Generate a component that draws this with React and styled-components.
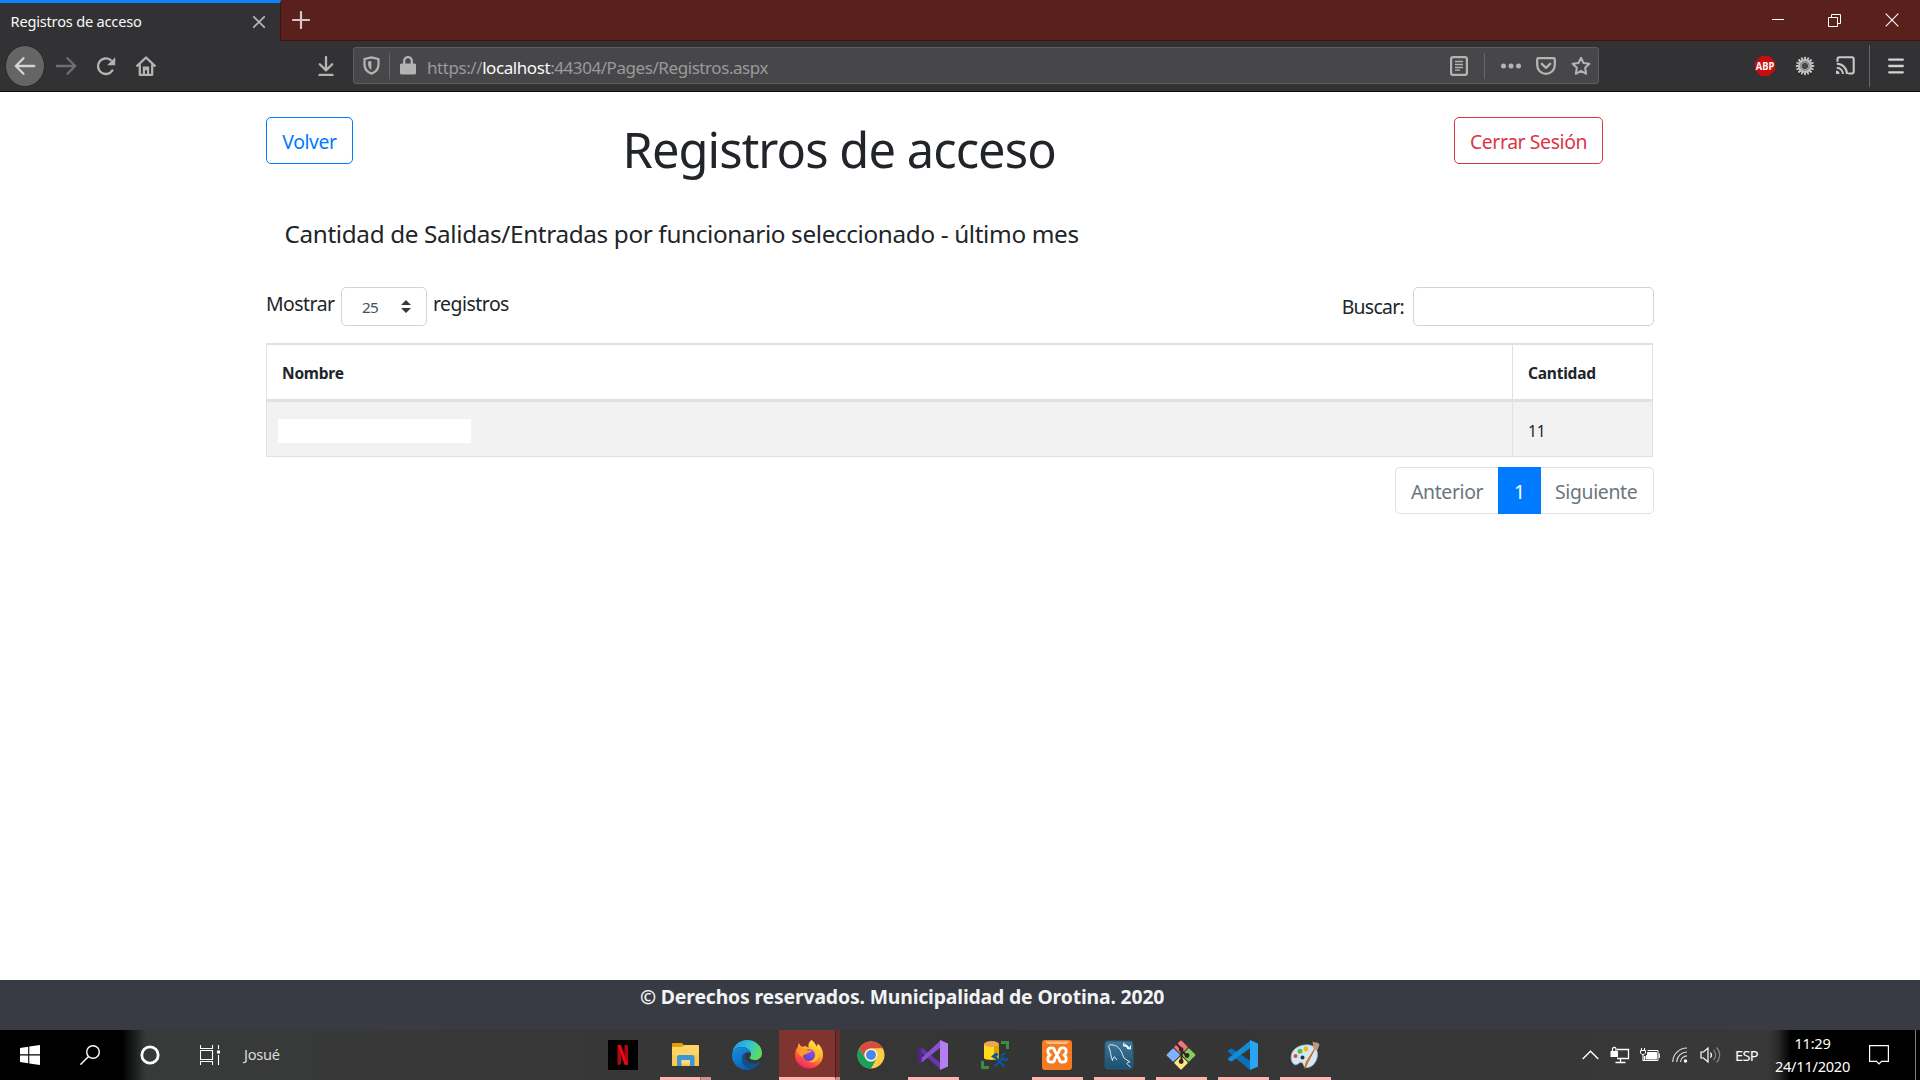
import React from "react";
import styled, { createGlobalStyle, css } from "styled-components";

const GlobalStyle = createGlobalStyle`
  *, *::before, *::after { box-sizing: border-box; }
  html, body { margin: 0; padding: 0; overflow: hidden; background: #fff; }
  body { font-family: "Segoe UI", "Noto Sans", "Open Sans", sans-serif; color: #212529; }
  svg { display: block; flex: none; }
`;

const type = (size, spacing = 0) => css`
  font-size: ${size}px;
  letter-spacing: ${spacing}px;
  white-space: pre;
`;

const Screen = styled.div`
  width: 1920px;
  height: 1080px;
  display: flex;
  flex-direction: column;
  overflow: hidden;
`;

/* ---------- Browser chrome ---------- */
const TitleBar = styled.header`
  display: flex;
  height: 41px;
  background: #5a201c;
  border-bottom: 1px solid #3b1512;
`;
const Tab = styled.div`
  display: flex;
  align-items: center;
  width: 281px;
  height: 41px;
  padding: 0 14px 0 10.5px;
  background: #323234;
  border-top: 3px solid #0a84ff;
  border-right: 1px solid #3b1512;
`;
const TabTitle = styled.span`
  ${type(14.6, -0.2)}
  line-height: 20px;
  flex: 1;
  padding-bottom: 2px;
  color: #f9f9fa;
`;
const NewTab = styled.div`
  display: flex;
  align-items: center;
  justify-content: center;
  width: 40px;
  height: 40px;
`;
const WindowControls = styled.div`
  display: flex;
  margin-left: auto;
`;
const WindowButton = styled.div`
  display: flex;
  align-items: center;
  justify-content: center;
  width: 57px;
  height: 40px;
`;
const NavBar = styled.nav`
  display: flex;
  align-items: center;
  height: 51px;
  padding: 0 4px 1px 5px;
  background: #323234;
  border-bottom: 1px solid #0c0c0d;
`;
const BackButton = styled.div`
  display: flex;
  align-items: center;
  justify-content: center;
  width: 40px;
  height: 42px;
  margin-right: 1px;
  background: #656566;
  border: 1px solid #29292b;
  border-radius: 50%;
`;
const Slot = styled.div`
  display: flex;
  align-items: center;
  justify-content: center;
  width: ${(p) => p.$w || 40}px;
  height: 36px;
  margin-left: ${(p) => p.$ml || 0}px;
`;
const AddressBar = styled.div`
  display: flex;
  align-items: center;
  width: 1246px;
  height: 37px;
  margin-left: 7px;
  background: #474749;
  border: 1px solid #5d5d5f;
  border-radius: 3px;
`;
const Divider = styled.div`
  width: 1px;
  height: ${(p) => p.$h || 26}px;
  margin: 0 ${(p) => p.$mr || 0}px 0 ${(p) => p.$ml || 0}px;
  background: #66676c;
`;
const Url = styled.span`
  ${type(17, -0.43)}
  flex: 1;
  padding: 3px 0 0 1px;
  color: #9a9a9c;
`;
const Host = styled.span`
  color: #f9f9fa;
`;
const Extensions = styled.div`
  display: flex;
  align-items: center;
  margin-left: auto;
`;

/* ---------- Page ---------- */
const Page = styled.main`
  flex: 1;
  padding: 25px 266px 0;
  background: #fff;
`;
const PageHeader = styled.div`
  display: flex;
  align-items: flex-start;
  width: 1337px;
  height: 102px;
`;
const OutlineButton = styled.button`
  ${type(19.4, -0.4)}
  width: ${(p) => p.$w}px;
  height: 47px;
  padding: 3px 0 0;
  font-family: inherit;
  line-height: 40px;
  color: ${(p) => p.$color};
  background: transparent;
  border: 1px solid ${(p) => p.$color};
  border-radius: 5px;
`;
const Title = styled.h1`
  ${type(48.8, -0.94)}
  flex: 1;
  margin: 2px 0 0 269.5px;
  font-weight: 400;
  line-height: 60px;
`;
const Subtitle = styled.h5`
  ${type(24.3, -0.355)}
  height: 68px;
  margin: 0;
  padding-left: 18.5px;
  font-weight: 400;
  line-height: 30px;
`;
const Controls = styled.div`
  display: flex;
  justify-content: space-between;
  height: 56px;
`;
const LengthLabel = styled.label`
  ${type(19.4, -0.5)}
  display: flex;
  height: 39px;
  line-height: 34px;
`;
const Select = styled.span`
  ${type(15.2, -0.7)}
  display: flex;
  align-items: center;
  justify-content: space-between;
  width: 86px;
  height: 39px;
  margin: 0 6px 0 auto;
  padding: 0 15px 0 20px;
  line-height: 20px;
  color: #495057;
  border: 1px solid #ced4da;
  border-radius: 5px;
`;
const LengthPrefix = styled.span`
  width: 75px;
`;
const SearchLabel = styled.label`
  ${type(19.4, -0.7)}
  display: flex;
  gap: 9px;
  height: 39px;
  line-height: 40px;
`;
const SearchInput = styled.input`
  width: 241px;
  height: 39px;
  border: 1px solid #ced4da;
  border-radius: 5px;
  outline: none;
`;
const Table = styled.div`
  width: 1387px;
  border: 1px solid #dee2e6;
  border-top-width: 2px;
`;
const Row = styled.div`
  display: grid;
  grid-template-columns: 1245px 1fr;
  height: ${(p) => (p.$head ? 57 : 54)}px;
  background: ${(p) => (p.$head ? "#fff" : "#f2f2f2")};
  border-bottom: ${(p) => (p.$head ? "3px solid #dee2e6" : "none")};
`;
const Cell = styled.div`
  ${type(15.5, -0.22)}
  display: flex;
  align-items: center;
  padding: ${(p) => (p.$head ? 2 : 4)}px 0 0 15px;
  font-weight: ${(p) => (p.$head ? 700 : 400)};
  & + & { border-left: 1px solid #dee2e6; }
`;
const NameMask = styled.div`
  width: 193px;
  height: 24px;
  margin: 0 0 0 -4px;
  background: #fff;
`;
const Pagination = styled.div`
  display: flex;
  width: 259px;
  height: 47px;
  margin: 10px 0 0 1129px;
`;
const PageLink = styled.div`
  ${type(19.4, -0.35)}
  width: ${(p) => p.$w}px;
  padding: 3px 0 0 ${(p) => p.$pl}px;
  line-height: 41px;
  color: ${(p) => (p.$active ? "#fff" : "#6c757d")};
  background: ${(p) => (p.$active ? "#007bff" : "#fff")};
  border: 1px solid ${(p) => (p.$active ? "#007bff" : "#dee2e6")};
  &:first-child { border-radius: 5px 0 0 5px; border-right: 0; }
  &:last-child { border-radius: 0 5px 5px 0; border-left: 0; }
`;
const Footer = styled.footer`
  ${type(19.4, -0.165)}
  height: 50px;
  padding: 2px 0 0 640px;
  font-weight: 700;
  line-height: 30px;
  color: #f3f4f5;
  background: #383b44;
`;

/* ---------- Taskbar ---------- */
const Taskbar = styled.div`
  display: flex;
  height: 50px;
  color: #fff;
  background: linear-gradient(90deg, #000 0, #000 122px, #1b1c1c 134px, #383a3a 146px, #383838 400px, #353535 1100px, #383838 1768px, #2a2a2a 1778px, #000 1791px);
`;
const TaskSlot = styled.div`
  display: flex;
  align-items: center;
  justify-content: center;
  width: 60px;
`;
const UserName = styled.span`
  ${type(14.6, -0.25)}
  width: 352px;
  padding-left: 4px;
  line-height: 49px;
  color: #dcdcdc;
`;
const AppSlot = styled.div`
  display: flex;
  flex-direction: column;
  justify-content: space-between;
  align-items: center;
  width: 62px;
  height: 50px;
  padding-top: 10px;
`;
const Underline = styled.div`
  display: flex;
  width: 51px;
  height: 3px;
  background: ${(p) => (p.$open ? "#ffb4b0" : "transparent")};
`;
const Stack = styled.div`
  width: ${(p) => p.$w}px;
  height: 3px;
  margin-left: auto;
  background: #cd928e;
  border-left: 1px solid #9c6d6a;
`;
const Focused = styled.div`
  display: flex;
  width: 62px;
  padding-left: 1px;
`;
const FocusedMain = styled.div`
  display: flex;
  justify-content: center;
  width: 56px;
  padding: 10px 0 7px 3px;
  background: #80342f;
  border-bottom: 3px solid #ffb4b0;
`;
const FocusedStack = styled.div`
  width: 5px;
  background: #6a2d29;
  border-left: 1px solid #4e211e;
  border-bottom: 3px solid #cd928e;
`;
const Tray = styled.div`
  display: flex;
  align-items: center;
  margin-left: auto;
`;
const TrayIcon = styled.div`
  display: flex;
  justify-content: center;
  width: 30px;
`;
const Language = styled.span`
  ${type(14.6, -0.65)}
  width: 39px;
  margin-left: 10px;
`;
const Clock = styled.div`
  ${type(14.6, -0.25)}
  display: flex;
  flex-direction: column;
  align-items: center;
  width: 77px;
  margin-right: 1px;
  line-height: 23px;
  padding-bottom: 1px;
`;
const ActionCenter = styled.div`
  display: flex;
  justify-content: center;
  width: 63px;
  padding-right: 9px;
`;
const ShowDesktop = styled.div`
  width: 5px;
  height: 50px;
  border-left: 1px solid #7a7a7a;
`;

/* ---------- Icons ---------- */
const Svg = ({ w = 20, h = w, children }) => (
  <svg width={w} height={h} viewBox={`0 0 ${w} ${h}`} fill="none">
    {children}
  </svg>
);
const line = { stroke: "#b4b4b5", strokeWidth: 2.3, strokeLinecap: "round", strokeLinejoin: "round" };

const CloseTab = () => <Svg w={14}><path d="M1.8 1.8 12.2 12.2M12.2 1.8 1.8 12.2" {...line} strokeWidth="1.8" /></Svg>;
const Plus = () => <Svg w={18}><path d="M9 1V17M1 9H17" stroke="#d6c5c4" strokeWidth="2.2" strokeLinecap="round" /></Svg>;
const Minimize = () => <Svg w={12}><path d="M0 5.5H12" stroke="#fff" /></Svg>;
const Restore = () => <Svg w={13}><path d="M.5 3.5H9.5V12.5H.5ZM3.5 3.5V.5H12.5V9.5H9.5" stroke="#fff" /></Svg>;
const CloseWindow = () => <Svg w={14}><path d="M.7.7 13.3 13.3M13.3.7.7 13.3" stroke="#fff" strokeWidth="1.1" /></Svg>;
const Arrow = ({ color, flip }) => (
  <Svg w={22}>
    <path d={flip ? "M1.8 11H20M12.5 3.2 20.2 11 12.5 18.8" : "M20.2 11H2M9.5 3.2 1.8 11 9.5 18.8"} {...line} stroke={color} />
  </Svg>
);
const Reload = () => (
  <Svg w={20}>
    <path d="M16.4 14.4A7.8 7.8 0 1 1 14.6 4" {...line} strokeWidth="2.4" />
    <path d="M19.2 1.2V9.2H11.2Z" fill="#b4b4b5" />
  </Svg>
);
const Home = () => (
  <Svg w={20}>
    <path d="M1.2 9.8 10 1.5 18.8 9.8M3.8 9V18.8H16.2V9" {...line} />
    <path d="M6.8 18V10.5H13.2V18H11V14.2H9V18Z" fill="#b4b4b5" />
  </Svg>
);
const Download = () => <Svg w={20}><path d="M10 1V14M3.8 8.2 10 14.4 16.2 8.2M3.5 19H16.5" {...line} /></Svg>;
const Shield = () => (
  <Svg w={17} h={19}>
    <path d="M8.5 1.4 15.5 3V8.6C15.5 13 12.5 16.2 8.5 17.6 4.5 16.2 1.5 13 1.5 8.6V3Z" {...line} strokeWidth="2.2" />
    <path d="M8.3 5V14C6.2 12.6 5.2 10.8 5.2 8.5V5.6Z" fill="#b4b4b5" />
  </Svg>
);
const Lock = () => (
  <Svg w={16} h={19}>
    <path d="M4.2 9V5A3.8 3.8 0 0 1 11.8 5V9" {...line} />
    <rect y="7.5" width="16" height="11" rx="1.5" fill="#b4b4b5" />
  </Svg>
);
const Reader = () => (
  <Svg w={18} h={20}>
    <rect x="1.1" y="1.1" width="15.8" height="17.8" rx="1.8" stroke="#b4b4b5" strokeWidth="2.2" />
    <path d="M5 5.5H13M5 8.5H13M5 11.5H13M5 14.2H10" stroke="#b4b4b5" strokeWidth="1.3" />
  </Svg>
);
const Dots = () => <Svg w={20} h={6}>{[2.5, 10, 17.5].map((x) => <circle key={x} cx={x} cy="3" r="2.5" fill="#b4b4b5" />)}</Svg>;
const Pocket = () => (
  <Svg w={20} h={18}>
    <path d="M1.2 2.5Q1.2 1.2 2.5 1.2H17.5Q18.8 1.2 18.8 2.5V8A8.8 8.8 0 0 1 1.2 8Z" {...line} />
    <path d="M5.8 6.8 10 10.8 14.2 6.8" {...line} />
  </Svg>
);
const Star = () => <Svg w={20}><path d="M10 1.8 12.5 7 18.4 7.8 14.1 11.8 15.2 17.8 10 14.9 4.8 17.8 5.9 11.8 1.6 7.8 7.5 7Z" {...line} strokeWidth="2" /></Svg>;
const Abp = () => (
  <Svg w={20}>
    <path d="M6 0H14L20 6V14L14 20H6L0 14V6Z" fill="#c70d0d" />
    <text x="10" y="13.7" textAnchor="middle" fontSize="10.4" fontWeight="700" fontFamily="Open Sans, sans-serif" textLength="18.5" lengthAdjust="spacingAndGlyphs" fill="#fff">ABP</text>
  </Svg>
);
const Gear = () => (
  <Svg w={20}>
    <ellipse cx="10" cy="18" rx="7" ry="1.6" fill="#222" />
    {Array.from({ length: 16 }, (_, i) => <rect key={i} x="9.1" y=".8" width="1.8" height="4" fill="#d0d0d0" transform={`rotate(${i * 22.5} 10 10)`} />)}
    <circle cx="10" cy="10" r="5" stroke="#bdbdbd" strokeWidth="4" />
    <circle cx="10" cy="10" r="4.2" stroke="#848484" strokeWidth="1.4" />
    <circle cx="10" cy="10" r="2.4" fill="#4a4a4a" />
  </Svg>
);
const Cast = () => (
  <Svg w={19}>
    <path d="M1.5 5V3Q1.5 1.3 3.2 1.3H16Q17.7 1.3 17.7 3V15.5Q17.7 17.5 15.7 17.5H13" {...line} strokeWidth="2.1" stroke="#c8c8c8" />
    <path d="M.8 7.8A10.2 10.2 0 0 1 11 18M.8 11.8A6.2 6.2 0 0 1 7 18" stroke="#c8c8c8" strokeWidth="2" />
    <path d="M0 14.5A3.5 3.5 0 0 1 3.5 18H0Z" fill="#c8c8c8" />
  </Svg>
);
const Menu = () => <Svg w={16}><path d="M1.2 1.7H14.8M1.2 8H14.8M1.2 14.3H14.8" stroke="#d2d2d2" strokeWidth="2.3" strokeLinecap="round" /></Svg>;
const Caret = () => <Svg w={10} h={13}><path d="M0 5 5 0 10 5ZM0 8 5 13 10 8Z" fill="#343a40" /></Svg>;

const Windows = () => <Svg w={20}><path d="M0 2.9 8.2 1.7V9.3H0ZM9.3 1.5 20 0V9.3H9.3ZM0 10.5H8.2V18.2L0 17ZM9.3 10.5H20V20L9.3 18.4Z" fill="#fff" /></Svg>;
const Search = () => <Svg w={20}><circle cx="13" cy="7" r="6.3" stroke="#fff" strokeWidth="1.4" /><path d="M8.5 11.5.4 19.6" stroke="#fff" strokeWidth="1.5" /></Svg>;
const Cortana = () => <Svg w={20}><circle cx="10" cy="10" r="8.2" stroke="#fff" strokeWidth="2.8" /></Svg>;
const TaskView = () => (
  <Svg w={20}>
    <path d="M.5 0V3.500H12.5V0M.5 5.5H12.5V14.5H.5ZM.5 20V16.500H12.5V20M18.5 0V4M18.5 10V20" stroke="#fff" strokeWidth="1.1" />
    <rect x="17" y="5.5" width="3" height="3" fill="#fff" />
  </Svg>
);

const Netflix = () => (
  <Svg w={30}>
    <rect width="30" height="30" fill="#000" />
    <path d="M9.5 5H13V24.6L9.5 25ZM16.5 5H20V25L16.5 24.6Z" fill="#b1060f" />
    <path d="M9.500 5H13L20 25 16.5 24.6Z" fill="#e50914" />
  </Svg>
);
const Folder = () => (
  <Svg w={30}>
    <path d="M2 4Q2 3 3 3H12L14.5 5.5V8H2Z" fill="#e2a008" />
    <path d="M2 7H12L14.5 5H28Q29 5 29 6V25Q29 26 28 26H3Q2 26 2 25Z" fill="#ffd467" />
    <path d="M2 15H29V25Q29 26 28 26H3Q2 26 2 25Z" fill="#fbc94c" />
    <path d="M7 26V17.5Q7 15 9.5 15H22Q24.5 15 24.5 17.5V26H20V20H11.5V26Z" fill="#3b97d9" />
    <path d="M11.5 20H20V23.5H11.5Z" fill="#f8dc8b" />
  </Svg>
);
const Edge = () => (
  <Svg w={30}>
    <defs>
      <linearGradient id="edgeTop" x1="0" y1=".3" x2="1" y2=".6"><stop stopColor="#1e9be8" /><stop offset=".5" stopColor="#30c2d8" /><stop offset="1" stopColor="#63e050" /></linearGradient>
      <linearGradient id="edgeLow" x1="0" y1="0" x2=".6" y2="1"><stop stopColor="#1892e0" /><stop offset="1" stopColor="#0b62b8" /></linearGradient>
    </defs>
    <path d="M.3 12.5C1.5 5 7.5 0 15 0 23.5 0 30 6 30 13.2 30 17.8 26.5 20 22.8 20 19.5 20 17.6 19 17.6 17.8 17.6 16.9 19 16.5 19 14 19 10.5 14.5 7 9.5 7 5 7 1.7 9.5.3 12.5Z" fill="url(#edgeTop)" />
    <path d="M.1 14C.8 10 5 7.3 9.5 7.3 14.5 7.3 18.2 10 18.8 13 16.5 11 10 12.5 10 18.5 10 24 14 28.5 19.5 29.3 8 32-.8 24 .1 14Z" fill="url(#edgeLow)" />
    <path d="M14.2 12.6C11.500 14 10 16 10 19 10 24.500 14.500 29 19 29.300 22.500 28.500 25.800 26.300 27.700 23.300 28.200 22.500 27.500 22 26.800 22.300 20.500 25.500 13 22 12.800 16.500 12.800 15 13.300 13.600 14.200 12.600Z" fill="#114f91" />
  </Svg>
);
const Firefox = () => (
  <Svg w={30}>
    <defs>
      <linearGradient id="ffBody" x1=".8" y1="0" x2=".25" y2="1"><stop stopColor="#fff44f" /><stop offset=".38" stopColor="#ffb52b" /><stop offset=".68" stopColor="#ff5a36" /><stop offset="1" stopColor="#ee1c78" /></linearGradient>
      <linearGradient id="ffCore" x1=".8" y1="0" x2=".3" y2="1"><stop stopColor="#a04bf0" /><stop offset="1" stopColor="#5047c8" /></linearGradient>
    </defs>
    <path d="M17.5 0C19.5 1.5 22 4 22.5 6.5 23.5 5.5 23.6 4.6 23.5 3.6 27 6 29 10.5 29 15A14 13.5 0 0 1 1 15C1 11 2.4 8.5 4 6.5 4 5 4.3 4 5 3 5.5 5 6.5 6 8 6.8 10.5 6 13 6 14.5 8 13.8 4.5 15.2 1.8 17.5 0Z" fill="url(#ffBody)" />
    <circle cx="15" cy="15" r="6" fill="url(#ffCore)" />
    <path d="M2.5 10C6 7.5 10.5 7.5 13.5 10.2L18 10.4C16.8 12.5 14.5 12.3 13 13.5 11.5 15 9.5 13.5 8.5 17 5.5 15.5 3 13 2.5 10Z" fill="#ff9a26" />
    <path d="M18 8C21 9.5 22.5 13 21.3 17 20 20 17.5 21.5 14.5 21.5 20 24 26 20 24.5 13 23.5 9.5 21 8 18 8Z" fill="#ffc52e" />
  </Svg>
);
const Chrome = () => (
  <Svg w={30}>
    <circle cx="15" cy="15" r="13.5" fill="#ffcd42" />
    <path d="M3.3 8.25A13.5 13.5 0 0 1 26.7 8.25H15A6.75 6.75 0 0 0 9.15 18.37Z" fill="#db4a3f" />
    <path d="M3.3 8.25A13.5 13.5 0 0 0 15 28.5L20.85 18.37A6.75 6.75 0 0 1 9.15 18.37Z" fill="#17a15f" />
    <circle cx="15" cy="15" r="6.3" fill="#f4f4f4" />
    <circle cx="15" cy="15" r="5" fill="#4a86f0" />
  </Svg>
);
const VisualStudio = () => (
  <Svg w={30}>
    <path d="M0 9 2.5 7.5 5 8.5 23 23.5V30L4 12.5V18L0 21Z" fill="#6b35ae" />
    <path d="M0 21 2.5 22.5 5 21.5 23 7V0L3 18.5 0 19.5Z" fill="#8a52d0" />
    <path d="M22 0 30 3.5V26.5L22 30Z" fill="#b47df2" />
    <path d="M0 9 2.5 7.5 3.6 8 3.6 22 2.5 22.5 0 21Z" fill="#52218f" />
  </Svg>
);
const SqlTools = () => (
  <Svg w={30}>
    <path d="M21 2.5H27.5V9M2.5 21V27.5H9" stroke="#3c8d3d" strokeWidth="3" />
    <path d="M4 4V18C4 20.5 19 20.5 19 18V4Z" fill="#ffd91c" />
    <path d="M14 4H19V18C19 18.8 17 19.3 14 19.6Z" fill="#d9a300" />
    <ellipse cx="11.5" cy="4" rx="7.5" ry="3" fill="#eba653" />
    <path d="M14 16 24.5 26.5M24 17.500 14.500 26.500" stroke="#09579c" strokeWidth="2.4" />
    <path d="M11 16.500 16 12.500 18.500 14.500 14 18.500Z" fill="#09579c" />
    <path d="M25.500 13.500A3.300 3.300 0 1 0 28 18" stroke="#09579c" strokeWidth="2" />
  </Svg>
);
const Xampp = () => (
  <Svg w={30}>
    <rect width="30" height="30" rx="3" fill="#f47b20" />
    <path d="M3 1.500H27Q26 4 23 4H7Q4 4 3 1.500Z" fill="#fff" opacity=".5" />
    <path d="M12.800 11Q12.500 7.800 9.300 7.800 5.800 7.800 5.800 11 5.800 14 8.300 15 5.800 16 5.800 19 5.800 22.200 9.300 22.200 12.500 22.200 12.800 19L17.200 11Q17.500 7.800 20.700 7.800 24.200 7.800 24.200 11 24.200 14 21.700 15 24.200 16 24.200 19 24.200 22.200 20.700 22.200 17.500 22.200 17.200 19Z" stroke="#fff" strokeWidth="2.800" strokeLinejoin="round" />
  </Svg>
);
const MySql = () => (
  <Svg w={30}>
    <defs><linearGradient id="mysql" x2="0" y2="1"><stop stopColor="#3f779b" /><stop offset="1" stopColor="#1d506f" /></linearGradient></defs>
    <rect x="1" y="1" width="28" height="28" rx="3" fill="url(#mysql)" stroke="#285b7a" />
    <path d="M8.500 20.500C6.500 16 7 13 5.800 10 4.500 7 4 4.500 6.800 4.800 10 5 13 5.500 16 9.500 18.500 13 19 17 20.500 18.500L26 22C23.500 22 22 23 23.500 24.500L26.500 27M8.500 20.500C9 18.500 9.500 17 10.500 16.800L13 20" stroke="#e6eff4" strokeWidth="1" strokeLinejoin="round" />
    <path d="M20.500 4.500 25.500 8.500" stroke="#fff" strokeWidth="2" />
    <path d="M20 2.500 19.500 6 23 6M23 8.500 26.500 9 26.500 5.500" stroke="#fff" strokeWidth="1" />
  </Svg>
);
const Git = () => (
  <Svg w={30}>
    <g transform="rotate(45 15 15)">
      <rect x="4.500" y="4.500" width="10" height="10" rx="1" fill="#f07878" />
      <rect x="15.500" y="4.500" width="10" height="10" rx="1" fill="#88cc5c" />
      <rect x="4.500" y="15.500" width="10" height="10" rx="1" fill="#80b3ff" />
      <rect x="15.500" y="15.500" width="10" height="10" rx="1" fill="#ffe680" />
    </g>
    <path d="M10 3.500 15.500 9V22M15 10 20.500 15.500" stroke="#332424" strokeWidth="2" />
    <circle cx="15.200" cy="9.500" r="2.300" fill="#332424" />
    <circle cx="15.200" cy="21.500" r="2.400" fill="#332424" />
    <circle cx="21" cy="15.500" r="2.400" fill="#332424" />
  </Svg>
);
const VsCode = () => (
  <Svg w={30}>
    <path d="M0 10.500 2.200 8.700 4 8.800 30 26 22 30 0 11.700Z" fill="#0a71b8" />
    <path d="M0 19.500 2.200 21.300 4 21.200 23 7.500V0L0 18.500Z" fill="#148bd5" />
    <path d="M22 0 30 3.500V26.500L22 30Z" fill="#2aa4f1" />
  </Svg>
);
const Paint = () => (
  <Svg w={30}>
    <path d="M15 5C22 4 28 8 27.500 15 27 22 22 27.500 17 27.500 12.500 27.500 14.500 23.500 11.500 22.500 9 21.500 8 26 4.500 24.500 1.500 23 .5 18.500 1.500 14.500 3 9 8.500 5.500 15 5Z" fill="#d3e7f5" stroke="#9bbbd2" strokeWidth=".8" />
    <circle cx="5.500" cy="16" r="2" fill="#e8453c" />
    <circle cx="10" cy="11.300" r="2.500" fill="#5bbd3d" />
    <circle cx="15.800" cy="9" r="2.400" fill="#f3b416" />
    <circle cx="12.500" cy="17.500" r="2" fill="#2a3138" />
    <path d="M25.500 7.500 17.500 23 15 28.500 16 22.500Z" fill="#e58a2a" stroke="#c96d16" />
    <path d="M22.500 1.500C25.500 3.500 27 1 29.500 4.500L27.500 10 23.500 8.500Z" fill="#c09a72" />
  </Svg>
);

const apps = [
  { Icon: Netflix },
  { Icon: Folder, open: true, stack: 11 },
  { Icon: Edge },
  { Icon: Firefox, focused: true },
  { Icon: Chrome },
  { Icon: VisualStudio, open: true },
  { Icon: SqlTools },
  { Icon: Xampp, open: true },
  { Icon: MySql, open: true },
  { Icon: Git, open: true },
  { Icon: VsCode, open: true },
  { Icon: Paint, open: true },
];

const ChevronUp = () => <Svg w={17} h={10}><path d="M.7 9 8.500 1.200 16.300 9" stroke="#fff" strokeWidth="1.400" /></Svg>;
const Network = () => (
  <Svg w={20} h={18}>
    <path d="M7 3.500H18.500V12.500H7M10.500 12.500V16.500M5.500 16.500H15.500" stroke="#fff" strokeWidth="1.300" />
    <path d="M2.500 5V2.500A2 2 0 0 1 6 2.500V5" stroke="#fff" strokeWidth="1.200" />
    <rect x=".5" y="5" width="7.500" height="6" fill="#fff" />
  </Svg>
);
const Battery = () => (
  <Svg w={20} h={16}>
    <path d="M7.500 3.500H18V13.500H4.500V9" stroke="#fff" />
    <path d="M7.500 5.500H16.500V12H6V9L7.500 7.500Z" fill="#fff" stroke="#fff" />
    <path d="M19.300 6.500V11M1.500 1V4M4.500 1V4M3 7V13.500H5" stroke="#fff" strokeWidth="1.100" />
    <path d="M.5 3.500H5.500V6L4 7.500H2L.5 6Z" stroke="#fff" fill="#383838" />
  </Svg>
);
const Wifi = () => (
  <Svg w={16}>
    <path d="M.7 15A14.300 14.300 0 0 1 15 1M4.700 15A10.300 10.300 0 0 1 15 5M8.500 15A6.500 6.500 0 0 1 15 8.800" stroke="#d9d9d9" strokeWidth="1.200" />
    <circle cx="13.500" cy="14" r="1.700" fill="#fff" />
  </Svg>
);
const Volume = () => (
  <Svg w={21} h={18}>
    <path d="M1 6H3.500L8 2V16L3.500 12H1Z" stroke="#fff" strokeWidth="1.200" />
    <path d="M10.500 6.500A4 4 0 0 1 10.500 11.500" stroke="#fff" strokeWidth="1.200" />
    <path d="M13.500 4A7 7 0 0 1 13.500 14M16.500 1.500A10.500 10.500 0 0 1 16.500 16.500" stroke="#858585" strokeWidth="1.200" />
  </Svg>
);
const Notifications = () => <Svg w={20}><path d="M.6.6H19.400V16.400H12.500L10 19 7.500 16.400H.6Z" stroke="#fff" strokeWidth="1.200" /></Svg>;

export default function App() {
  return (
    <Screen>
      <GlobalStyle />
      <TitleBar>
        <Tab>
          <TabTitle>Registros de acceso</TabTitle>
          <CloseTab />
        </Tab>
        <NewTab><Plus /></NewTab>
        <WindowControls>
          <WindowButton><Minimize /></WindowButton>
          <WindowButton><Restore /></WindowButton>
          <WindowButton><CloseWindow /></WindowButton>
        </WindowControls>
      </TitleBar>
      <NavBar>
        <BackButton><Arrow color="#d4d4d5" /></BackButton>
        <Slot><Arrow flip color="#6f6f71" /></Slot>
        <Slot><Reload /></Slot>
        <Slot><Home /></Slot>
        <Slot $ml={140}><Download /></Slot>
        <AddressBar>
          <Slot $w={34}><Shield /></Slot>
          <Divider $ml={1} />
          <Slot $w={36}><Lock /></Slot>
          <Url>https://<Host>localhost</Host>:44304/Pages/Registros.aspx</Url>
          <Slot $w={36}><Reader /></Slot>
          <Divider $ml={7} $mr={8} />
          <Slot $w={35}><Dots /></Slot>
          <Slot $w={35}><Pocket /></Slot>
          <Slot $w={35}><Star /></Slot>
        </AddressBar>
        <Extensions>
          <Slot><Abp /></Slot>
          <Slot><Gear /></Slot>
          <Slot><Cast /></Slot>
          <Divider $h={42} $ml={4} $mr={6} />
          <Slot><Menu /></Slot>
        </Extensions>
      </NavBar>

      <Page>
        <PageHeader>
          <OutlineButton $w={87} $color="#007bff">Volver</OutlineButton>
          <Title>Registros de acceso</Title>
          <OutlineButton $w={149} $color="#dc3545">Cerrar Sesión</OutlineButton>
        </PageHeader>
        <Subtitle>Cantidad de Salidas/Entradas por funcionario seleccionado - último mes</Subtitle>
        <Controls>
          <LengthLabel>
            <LengthPrefix>Mostrar</LengthPrefix>
            <Select>25<Caret /></Select>
            registros
          </LengthLabel>
          <SearchLabel>
            Buscar:
            <SearchInput />
          </SearchLabel>
        </Controls>
        <Table>
          <Row $head>
            <Cell $head>Nombre</Cell>
            <Cell $head>Cantidad</Cell>
          </Row>
          <Row>
            <Cell><NameMask /></Cell>
            <Cell>11</Cell>
          </Row>
        </Table>
        <Pagination>
          <PageLink $w={103} $pl={15}>Anterior</PageLink>
          <PageLink $w={43} $pl={15} $active>1</PageLink>
          <PageLink $w={113} $pl={14}>Siguiente</PageLink>
        </Pagination>
      </Page>
      <Footer>© Derechos reservados. Municipalidad de Orotina. 2020</Footer>

      <Taskbar>
        <TaskSlot><Windows /></TaskSlot>
        <TaskSlot><Search /></TaskSlot>
        <TaskSlot><Cortana /></TaskSlot>
        <TaskSlot><TaskView /></TaskSlot>
        <UserName>Josué</UserName>
        {apps.map(({ Icon, open, stack, focused }, i) =>
          focused ? (
            <Focused key={i}>
              <FocusedMain><Icon /></FocusedMain>
              <FocusedStack />
            </Focused>
          ) : (
            <AppSlot key={i}>
              <Icon />
              <Underline $open={open}>{stack && <Stack $w={stack} />}</Underline>
            </AppSlot>
          )
        )}
        <Tray>
          <TrayIcon><ChevronUp /></TrayIcon>
          <TrayIcon><Network /></TrayIcon>
          <TrayIcon><Battery /></TrayIcon>
          <TrayIcon><Wifi /></TrayIcon>
          <TrayIcon><Volume /></TrayIcon>
          <Language>ESP</Language>
          <Clock>
            <span>11:29</span>
            <span>24/11/2020</span>
          </Clock>
          <ActionCenter><Notifications /></ActionCenter>
          <ShowDesktop />
        </Tray>
      </Taskbar>
    </Screen>
  );
}
